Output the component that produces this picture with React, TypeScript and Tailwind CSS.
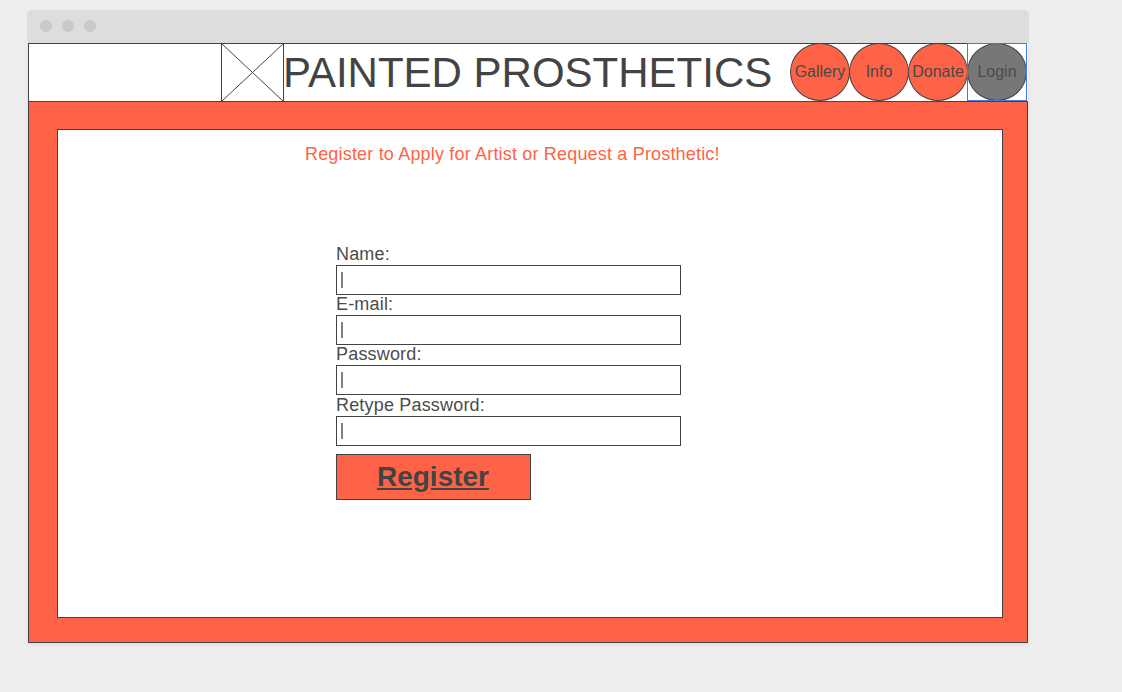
const navItems = [
  { label: "Gallery", active: false },
  { label: "Info", active: false },
  { label: "Donate", active: false },
  { label: "Login", active: true },
];

const fields = [
  { label: "Name:", height: "h-[50px]" },
  { label: "E-mail:", height: "h-[50px]" },
  { label: "Password:", height: "h-[51px]" },
  { label: "Retype Password:", height: "h-[50px]" },
];

function TitleBar() {
  return (
    <div className="flex h-[33px] items-start gap-2.5 rounded-t-[5px] bg-[#dddddd] pt-2.5 pl-[13px]">
      <span className="size-3 rounded-full bg-[#c9c9c9]" />
      <span className="size-3 rounded-full bg-[#c9c9c9]" />
      <span className="size-3 rounded-full bg-[#c9c9c9]" />
    </div>
  );
}

function LogoPlaceholder() {
  return (
    <svg className="ml-[192px] h-[59px] w-[63px] shrink-0" viewBox="0 0 63 59" fill="none" stroke="#434343">
      <path d="M0.5 0.5H62.5V58.5H0.5Z" />
      <path d="M0.5 0.5L62.5 58.5M62.5 0.5L0.5 58.5" />
    </svg>
  );
}

function NavButton({ label, active }: { label: string; active: boolean }) {
  return (
    <div className={active ? "relative -ml-px h-[58px] w-[60px] bg-white" : "-ml-px h-[58px] w-[60px]"}>
      <button
        className={
          active
            ? "block h-[58px] w-[60px] rounded-[50%] border border-[#434343] bg-[#777777] text-center text-base leading-[56px] text-[#4b4b4b]"
            : "block h-[58px] w-[60px] rounded-[50%] border border-[#434343] bg-[#ff6347] text-center text-base leading-[56px] text-[#4d4646]"
        }
      >
        {label}
      </button>
      {active && <span className="pointer-events-none absolute inset-0 border border-[#3d7cf0]" />}
    </div>
  );
}

export default function App() {
  return (
    <div className="h-[692px] w-full overflow-hidden bg-[#ededed] pt-2.5 pl-[27px] font-['Liberation_Sans',Arial,sans-serif] text-[#434343]">
      <div className="w-[1002px]">
        <TitleBar />
        <div className="ml-px w-[1000px] shadow-[0_2px_4px_rgba(0,0,0,0.06)]">
          <header className="flex h-[58px] border-l border-[#434343] bg-white">
            <div className="flex h-[58px] w-[762px] border-t border-[#434343]">
              <div className="-mt-px flex">
                <LogoPlaceholder />
                <h1 className="-ml-px h-[58px] text-[42px] leading-[60px] whitespace-nowrap">PAINTED PROSTHETICS</h1>
              </div>
            </div>
            <nav className="mr-px flex flex-1 bg-[linear-gradient(#434343_1px,transparent_1px)]">
              {navItems.map((item) => (
                <NavButton key={item.label} {...item} />
              ))}
            </nav>
          </header>
          <main className="h-[542px] border border-[#434343] bg-[#ff6347] pt-[27px] pl-7">
            <section className="h-[489px] w-[946px] border border-[#434343] bg-white">
              <p className="mt-[14px] ml-[247px] h-5 text-lg leading-5 tracking-[0.18px] whitespace-nowrap text-[#ff6347]">
                Register to Apply for Artist or Request a Prosthetic!
              </p>
              <form className="mt-20 ml-[278px] w-[345px]" onSubmit={(e) => e.preventDefault()}>
                {fields.map(({ label, height }) => (
                  <label key={label} className={`block ${height}`}>
                    <span className="block h-[21px] text-lg leading-5 tracking-[0.18px] text-[#4c4c4c]">{label}</span>
                    <span className="flex h-[30px] items-center border border-[#434343] bg-white pl-1">
                      <span className="h-4 w-0.5 bg-[#808080]" />
                    </span>
                  </label>
                ))}
                <button className="mt-[9px] block h-[46px] w-[195px] border border-[#434343] bg-[#ff6347] pr-px text-center text-[28px] leading-[44px] font-bold underline">
                  Register
                </button>
              </form>
            </section>
          </main>
        </div>
      </div>
    </div>
  );
}
